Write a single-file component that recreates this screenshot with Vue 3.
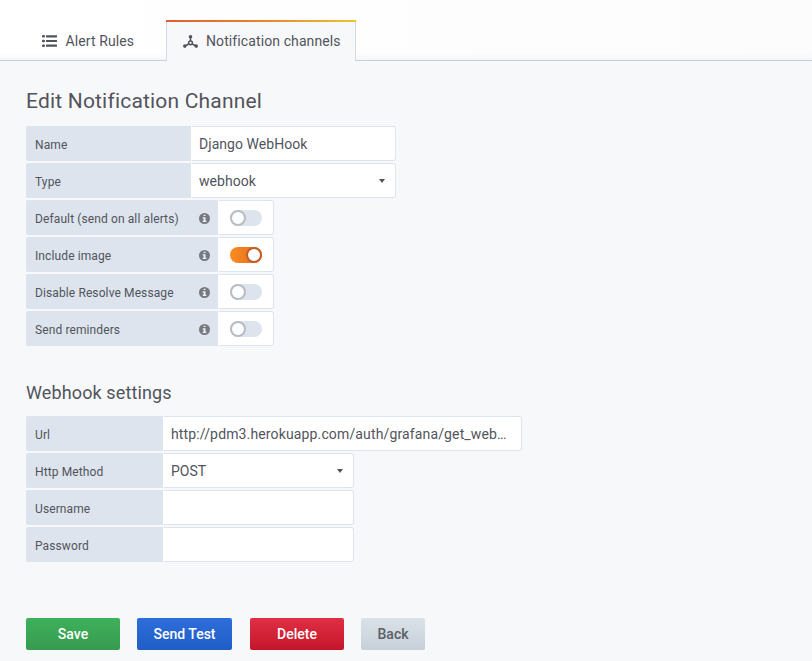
<script setup>
const switches = [
  { label: 'Default (send on all alerts)', on: false },
  { label: 'Include image', on: true },
  { label: 'Disable Resolve Message', on: false },
  { label: 'Send reminders', on: false },
]
const settings = [
  { label: 'Url', value: 'http://pdm3.herokuapp.com/auth/grafana/get_web…', wide: true },
  { label: 'Http Method', value: 'POST', select: true },
  { label: 'Username', value: '' },
  { label: 'Password', value: '' },
]
const buttons = [
  { text: 'Save', kind: 'save' },
  { text: 'Send Test', kind: 'test' },
  { text: 'Delete', kind: 'delete' },
  { text: 'Back', kind: 'back' },
]
</script>

<template>
  <div class="page">
    <header class="tabs">
      <div class="tab">
        <svg class="tab-icon" viewBox="0 0 15 12" width="15" height="12">
          <g fill="currentColor">
            <rect x="0" y="0" width="3" height="2.6" rx="1" />
            <rect x="0" y="4.7" width="3" height="2.6" rx="1" />
            <rect x="0" y="9.4" width="3" height="2.6" rx="1" />
            <rect x="4" y="0.2" width="11" height="2.2" rx="0.4" />
            <rect x="4" y="4.9" width="11" height="2.2" rx="0.4" />
            <rect x="4" y="9.6" width="11" height="2.2" rx="0.4" />
          </g>
        </svg>
        <span>Alert Rules</span>
      </div>
      <div class="tab active">
        <svg class="tab-icon" viewBox="0 0 15 13" width="15" height="13">
          <g fill="none" stroke="currentColor" stroke-width="1.5">
            <path d="M7.5 2v4M5.8 9 2 11M9.2 9l3.8 2" />
            <circle cx="7.5" cy="7.8" r="1.9" />
          </g>
          <g fill="currentColor">
            <circle cx="7.5" cy="1.8" r="1.8" />
            <circle cx="1.8" cy="11.1" r="1.8" />
            <circle cx="13.2" cy="11.1" r="1.8" />
          </g>
        </svg>
        <span>Notification channels</span>
      </div>
    </header>

    <main class="content">
      <h3 class="title">Edit Notification Channel</h3>
      <section class="group">
        <div class="row">
          <div class="label name-label">Name</div>
          <div class="field name-field">Django WebHook</div>
        </div>
        <div class="row">
          <div class="label name-label">Type</div>
          <div class="field name-field">webhook<i class="caret"></i></div>
        </div>
        <div v-for="s in switches" :key="s.label" class="row">
          <div class="label switch-label">
            <span>{{ s.label }}</span>
            <svg class="info" viewBox="0 0 10 10" width="11" height="11">
              <circle cx="5" cy="5" r="5" fill="#767980" />
              <path d="M4.2 1.5h1.7v1.3H4.2zM3.4 3.8h2.5v3.3h.8v1.1H3.4V7.1h.8V4.9h-.8z" fill="#eef1f6" />
            </svg>
          </div>
          <div class="switch-box">
            <div class="toggle" :class="{ on: s.on }"><i class="knob"></i></div>
          </div>
        </div>
      </section>

      <h4 class="subtitle">Webhook settings</h4>
      <section class="group">
        <div v-for="f in settings" :key="f.label" class="row">
          <div class="label set-label">{{ f.label }}</div>
          <div class="field" :class="f.wide ? 'wide' : 'narrow'">{{ f.value }}<i v-if="f.select" class="caret"></i></div>
        </div>
      </section>

      <div class="actions">
        <button v-for="b in buttons" :key="b.kind" class="btn" :class="b.kind">{{ b.text }}</button>
      </div>
    </main>
  </div>
</template>

<style>
body {
  margin: 0;
  background: #f7f8fa;
  overflow: hidden;
}
</style>

<style scoped>
.page {
  height: 661px;
  overflow: hidden;
  box-sizing: border-box;
  background: #f7f8fa;
  color: #52545c;
  font-family: Roboto, sans-serif;
  white-space: nowrap;
}
.tabs {
  display: flex;
  align-items: flex-end;
  box-sizing: border-box;
  height: 61px;
  padding-left: 26px;
  border-bottom: 1px solid #c7d0d9;
  background: linear-gradient(90deg, #fff, #fcfcfd);
  box-shadow: inset 0 -9px 8px -8px #edf0f4;
}
.tab {
  display: flex;
  align-items: center;
  box-sizing: border-box;
  width: 140px;
  height: 40px;
  padding: 1px 0 0 16px;
  font-size: 14px;
  letter-spacing: 0.1px;
}
.tab-icon {
  margin-right: 8.5px;
  flex: none;
}
.active {
  width: 190px;
  height: 41px;
  margin-bottom: -1px;
  padding: 0 0 1px 17px;
  border: 1px solid;
  border-image: linear-gradient(90deg, #e05f32, #e9812d 50%, #eac62f) 1;
  border-width: 2px 0 0;
  background:
    linear-gradient(#d3dae3, #d3dae3) left / 1px 100% no-repeat,
    linear-gradient(#d3dae3, #d3dae3) right / 1px 100% no-repeat,
    #f7f8fa;
}
.active .tab-icon {
  margin-right: 8px;
}
.content {
  padding: 27px 26px 0;
}
.title {
  margin: 0 0 12px;
  font-size: 21px;
  line-height: 26px;
  font-weight: 400;
  letter-spacing: 0.19px;
}
.subtitle {
  margin: 34px 0 10px;
  font-size: 18px;
  line-height: 26px;
  font-weight: 400;
  letter-spacing: 0.12px;
}
.group {
  display: flex;
  flex-direction: column;
  gap: 2px;
}
.row {
  display: flex;
  height: 35px;
}
.label {
  display: flex;
  align-items: center;
  box-sizing: border-box;
  padding: 2px 8px 0 9px;
  border-radius: 2px 0 0 2px;
  background: #dde4ed;
  font-size: 12px;
  font-weight: 400;
  letter-spacing: 0.11px;
}
.name-label {
  width: 165px;
}
.switch-label {
  width: 192px;
  justify-content: space-between;
}
.set-label {
  width: 137px;
}
.field {
  display: flex;
  align-items: center;
  justify-content: space-between;
  box-sizing: border-box;
  padding: 0 10px 0 7px;
  border: 1px solid #dde4ed;
  border-left-color: #fff;
  border-radius: 0 3px 3px 0;
  background: #fff;
  font-size: 14px;
}
.name-field {
  width: 205px;
  letter-spacing: 0.05px;
}
.wide {
  width: 359px;
  letter-spacing: 0.14px;
}
.narrow {
  width: 191px;
}
.caret {
  border: 3.5px solid transparent;
  border-top: 4px solid #52545c;
  border-bottom: 0;
}
.switch-box {
  display: flex;
  align-items: center;
  justify-content: center;
  box-sizing: border-box;
  width: 56px;
  border: 1px solid #dde4ed;
  border-left-color: #fff;
  border-radius: 0 3px 3px 0;
  background: #fff;
}
.toggle {
  display: flex;
  width: 32px;
  height: 16px;
  border-radius: 8px;
  background: #dde4ed;
}
.knob {
  box-sizing: border-box;
  width: 16px;
  height: 16px;
  border: 2px solid #b9bcc0;
  border-radius: 50%;
  background: #fcfdff;
}
.on {
  justify-content: flex-end;
  background: linear-gradient(90deg, #fa8c22, #e06b20);
}
.on .knob {
  border-color: #c65d28;
}
.actions {
  display: flex;
  margin-top: 56px;
}
.btn {
  height: 32px;
  padding: 0;
  border: 0;
  border-radius: 2px;
  color: #fff;
  font: 500 14px Roboto, sans-serif;
}
.save {
  width: 94px;
  margin-right: 17px;
  background: linear-gradient(#3eb15b, #369b4f);
}
.test {
  width: 95px;
  margin-right: 18px;
  background: linear-gradient(#2e6edb, #1f5ec4);
}
.delete {
  width: 94px;
  margin-right: 17px;
  background: linear-gradient(#e02f44, #c4162a);
}
.back {
  width: 64px;
  color: #5c5f67;
  background: linear-gradient(#dae1e9, #c7d0d9);
}
</style>
